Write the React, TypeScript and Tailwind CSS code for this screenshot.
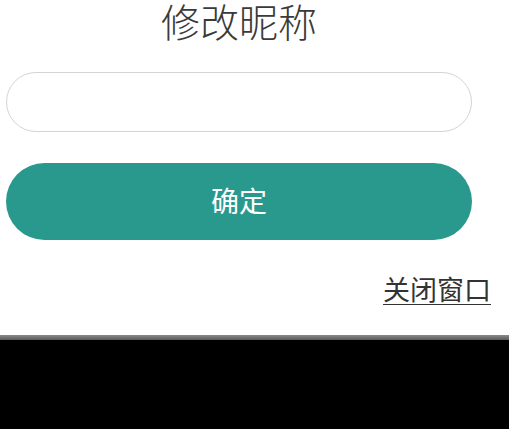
import React, { useState } from "react";

const App = () => {
  const [nickname, setNickname] = useState("");

  return (
    <div
      className="flex h-[429px] w-[509px] flex-col bg-black"
      style={{ fontFamily: '"Noto Sans CJK SC", "Noto Sans", sans-serif' }}
    >
      <div className="flex h-[335px] flex-col bg-white">
        <div className="flex w-[478px] flex-col px-[6px]">
          <h1 className="h-[40px] text-center text-[39px] leading-[40px] font-light text-[#3a3a3a]">
            修改昵称
          </h1>
          <input
            value={nickname}
            onChange={(e) => setNickname(e.target.value)}
            className="mt-[32px] h-[60px] w-full rounded-full border border-[#d4d4d4] bg-white px-6 text-[24px] text-[#333333] outline-none"
          />
          <button className="mt-[31px] h-[77px] w-full rounded-full bg-[#2a998d] pb-[4px] text-[28px] leading-none text-white">
            确定
          </button>
        </div>
        <div className="mt-[35px] flex justify-end pr-[18px]">
          <a
            href="#"
            className="text-[27px] leading-[27px] text-[#333333] underline decoration-1 underline-offset-[4px]"
          >
            关闭窗口
          </a>
        </div>
      </div>
      <div className="h-[5px] bg-gradient-to-b from-[#8a8a8a] to-[#5a5a5a]" />
      <div className="flex-1 bg-black" />
    </div>
  );
};

export default App;
